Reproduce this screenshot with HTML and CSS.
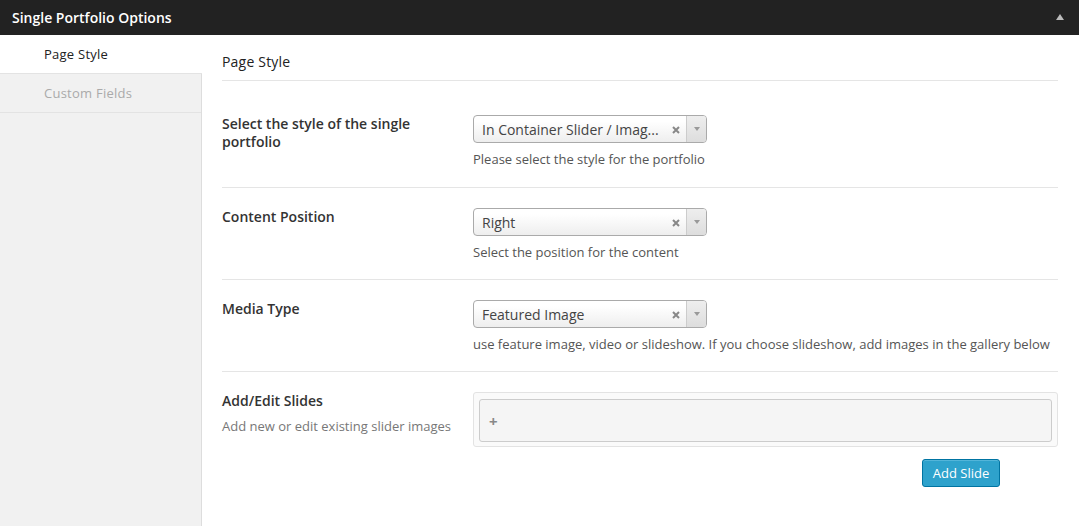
FILE: index.html
```html
<!DOCTYPE html>
<html>
<head>
<meta charset="utf-8">
<link rel="stylesheet" href="styles.css">
</head>
<body>
<div class="box">
  <div class="box-header">
    <span class="box-title">Single Portfolio Options</span>
    <span class="toggle"></span>
  </div>
  <div class="box-body">
    <div class="sidebar">
      <div class="tab active">Page Style</div>
      <div class="tab">Custom Fields</div>
    </div>
    <div class="main">
      <div class="section-title">Page Style</div>
      <div class="row first">
        <div class="label-col"><div class="label">Select the style of the single portfolio</div></div>
        <div class="field-col">
          <div class="select"><span class="select-text">In Container Slider / Imag...</span><span class="clear"><svg width="8" height="8" viewBox="0 0 8 8"><path d="M1 1L7 7M7 1L1 7" stroke="#888" stroke-width="2"/></svg></span><span class="arrow"><span class="tri"></span></span></div>
          <div class="desc">Please select the style for the portfolio</div>
        </div>
      </div>
      <div class="row">
        <div class="label-col"><div class="label">Content Position</div></div>
        <div class="field-col">
          <div class="select"><span class="select-text">Right</span><span class="clear"><svg width="8" height="8" viewBox="0 0 8 8"><path d="M1 1L7 7M7 1L1 7" stroke="#888" stroke-width="2"/></svg></span><span class="arrow"><span class="tri"></span></span></div>
          <div class="desc">Select the position for the content</div>
        </div>
      </div>
      <div class="row">
        <div class="label-col"><div class="label">Media Type</div></div>
        <div class="field-col">
          <div class="select"><span class="select-text">Featured Image</span><span class="clear"><svg width="8" height="8" viewBox="0 0 8 8"><path d="M1 1L7 7M7 1L1 7" stroke="#888" stroke-width="2"/></svg></span><span class="arrow"><span class="tri"></span></span></div>
          <div class="desc">use feature image, video or slideshow. If you choose slideshow, add images in the gallery below</div>
        </div>
      </div>
      <div class="row last">
        <div class="label-col">
          <div class="label">Add/Edit Slides</div>
          <div class="sublabel">Add new or edit existing slider images</div>
        </div>
        <div class="field-col wide">
          <div class="gallery"><div class="gallery-inner"><span class="plus">+</span></div></div>
          <div class="btn-row"><button class="btn">Add Slide</button></div>
        </div>
      </div>
    </div>
  </div>
</div>
</body>
</html>
```
FILE: styles.css
```css
* { box-sizing: border-box; }
html, body { margin: 0; padding: 0; background: #fff; }
body { font-family: "Open Sans", "Liberation Sans", sans-serif; color: #222; width: 1079px; height: 526px; overflow: hidden; }
.box-header { height: 35px; background: #222; display: flex; align-items: center; justify-content: space-between; padding: 0 15px 0 12px; }
.box-title { color: #fff; font-size: 14px; font-weight: 600; line-height: 20px; }
.toggle { width: 0; height: 0; border-left: 4px solid transparent; border-right: 4px solid transparent; border-bottom: 6px solid #bbb; margin-top: -1px; }
.box-body { display: flex; height: 491px; }
.sidebar { width: 202px; flex: none; background: #f1f1f1; border-right: 1px solid #ddd; }
.tab { font-size: 13px; line-height: 18px; padding: 10px 0 10px 44px; border-bottom: 1px solid #e3e3e3; color: #aaa; letter-spacing: 0.25px; }
.tab.active { background: #fff; color: #222; margin-right: -1px; position: relative; }
.main { flex: 1; padding: 17px 21px 0 20px; }
.section-title { font-size: 14px; line-height: 20px; color: #222; padding-bottom: 8px; border-bottom: 1px solid #e5e5e5; margin-bottom: 14px; letter-spacing: 0.2px; }
.row { display: flex; padding: 20px 0 18px; border-bottom: 1px solid #e5e5e5; }
.row.first { padding-bottom: 19px; }
.row.last { border-bottom: none; }
.label-col { width: 251px; flex: none; padding-right: 21px; }
.label { font-size: 14px; font-weight: 600; line-height: 18px; color: #333; }
.sublabel { font-size: 13px; line-height: 18px; color: #777; margin-top: 7px; }
.field-col { flex: 1; }
.select { width: 234px; height: 28px; border: 1px solid #aaa; border-radius: 4px; background: linear-gradient(#fff 20%, #eee); display: flex; align-items: center; }
.select-text { flex: 1; padding-left: 8px; font-size: 14px; color: #444; white-space: nowrap; overflow: hidden; }
.clear { width: 20px; display: flex; align-items: center; justify-content: center; margin-top: 2px; }
.arrow { width: 20px; height: 100%; border-left: 1px solid #ccc; background: linear-gradient(#eee, #ddd); border-radius: 0 3px 3px 0; display: flex; align-items: center; justify-content: center; }
.tri { width: 0; height: 0; border-left: 3px solid transparent; border-right: 3px solid transparent; border-top: 4px solid #999; }
.desc { font-size: 13px; line-height: 18px; color: #555; margin-top: 7px; white-space: nowrap; }
.gallery { border: 1px solid #e3e3e3; border-radius: 3px; background: #fafafa; padding: 6px 5px 4px; }
.gallery-inner { height: 43px; border: 1px solid #ccc; border-radius: 3px; background: #f5f5f5; display: flex; align-items: center; padding-left: 9px; }
.plus { font-size: 15px; font-weight: 700; color: #888; }
.btn-row { display: flex; justify-content: flex-end; padding-right: 58px; margin-top: 12px; }
.btn { font-family: inherit; font-size: 13px; color: #fff; background: #2ea2cc; border: 1px solid #0074a2; border-radius: 3px; height: 28px; width: 78px; padding: 0; box-shadow: inset 0 1px 0 rgba(120,200,230,.5); }
```
